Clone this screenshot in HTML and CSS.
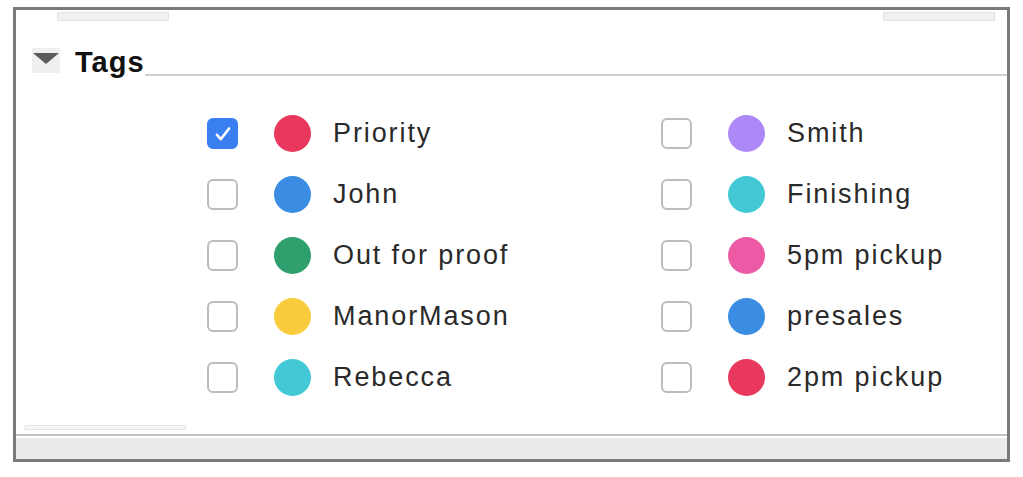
FILE: index.html
```html
<!DOCTYPE html>
<html lang="en">

<head>
    <meta charset="UTF-8">
    <title>Tags</title>
    <link rel="stylesheet" href="styles.css">
</head>

<body>
    <div class="panel">
        <div class="top-strip">
            <span class="ghost-bar"></span>
            <span class="ghost-bar"></span>
        </div>

        <div class="section-header">
            <span class="disclosure"><span class="arrow"></span></span>
            <h2>Tags</h2>
            <span class="header-rule"></span>
        </div>

        <div class="tag-list">
            <label class="tag-row">
                <span class="check checked">
                    <svg viewBox="0 0 16 16" width="22" height="22"><path d="M3.6 8.6 L6.4 11.8 L12.4 4" fill="none" stroke="#fff" stroke-width="1.9" stroke-linecap="round" stroke-linejoin="round"/></svg>
                </span>
                <span class="dot" style="background:#e8385e"></span>
                <span class="tag-name">Priority</span>
            </label>
            <label class="tag-row">
                <span class="check"></span>
                <span class="dot" style="background:#ad89f7"></span>
                <span class="tag-name">Smith</span>
            </label>
            <label class="tag-row">
                <span class="check"></span>
                <span class="dot" style="background:#3a8de2"></span>
                <span class="tag-name">John</span>
            </label>
            <label class="tag-row">
                <span class="check"></span>
                <span class="dot" style="background:#43c9d5"></span>
                <span class="tag-name">Finishing</span>
            </label>
            <label class="tag-row">
                <span class="check"></span>
                <span class="dot" style="background:#2f9f6d"></span>
                <span class="tag-name">Out for proof</span>
            </label>
            <label class="tag-row">
                <span class="check"></span>
                <span class="dot" style="background:#ec5aa6"></span>
                <span class="tag-name">5pm pickup</span>
            </label>
            <label class="tag-row">
                <span class="check"></span>
                <span class="dot" style="background:#f8cc3c"></span>
                <span class="tag-name">ManorMason</span>
            </label>
            <label class="tag-row">
                <span class="check"></span>
                <span class="dot" style="background:#3a8de2"></span>
                <span class="tag-name">presales</span>
            </label>
            <label class="tag-row">
                <span class="check"></span>
                <span class="dot" style="background:#43c9d5"></span>
                <span class="tag-name">Rebecca</span>
            </label>
            <label class="tag-row">
                <span class="check"></span>
                <span class="dot" style="background:#e8385e"></span>
                <span class="tag-name">2pm pickup</span>
            </label>
        </div>

        <div class="spacer"></div>

        <div class="panel-footer">
            <span class="ghost-bar small"></span>
            <div class="footer-rule"></div>
            <div class="footer-fill"></div>
        </div>
    </div>
</body>

</html>
```

FILE: styles.css
```css
body {
    margin: 0;
    background: #ffffff;
    font-family: 'Liberation Sans', Arial, sans-serif;
}

.panel {
    box-sizing: border-box;
    width: 997px;
    height: 455px;
    margin: 7px 0 0 13px;
    border: 3px solid #7a7a7a;
    display: flex;
    flex-direction: column;
    background: #ffffff;
}

.top-strip {
    height: 38px;
    display: flex;
    justify-content: space-between;
    align-items: flex-start;
    padding: 2px 12px 0 41px;
    box-sizing: border-box;
}

.ghost-bar {
    display: block;
    width: 110px;
    height: 7px;
    background: #f0f0f0;
    border: 1px solid #e2e2e2;
    border-radius: 1px;
}

.section-header {
    height: 28px;
    display: flex;
    align-items: flex-end;
}

.disclosure {
    width: 28px;
    height: 25px;
    margin: 0 0 3px 16px;
    background: #efefef;
    display: flex;
    align-items: center;
    justify-content: center;
}

.arrow {
    width: 0;
    height: 0;
    border-left: 13px solid transparent;
    border-right: 13px solid transparent;
    border-top: 11px solid #5a5a5a;
    margin-top: -4px;
}

.section-header h2 {
    margin: 0 0 0 15px;
    font-size: 29px;
    font-weight: bold;
    letter-spacing: 1px;
    color: #111111;
    line-height: 28px;
}

.header-rule {
    flex: 1;
    height: 0;
    border-bottom: 2px solid #cfcfcf;
}

.tag-list {
    display: grid;
    grid-template-columns: 454px 340px;
    grid-auto-rows: 61px;
    margin-top: 27px;
    padding-left: 191px;
}

.tag-row {
    display: flex;
    align-items: center;
}

.check {
    box-sizing: border-box;
    width: 31px;
    height: 31px;
    border: 2px solid #bcbcbc;
    border-radius: 6px;
    background: #ffffff;
    display: flex;
    align-items: center;
    justify-content: center;
}

.check.checked {
    background: #3a7ff0;
    border-color: #3a7ff0;
}

.dot {
    width: 37px;
    height: 37px;
    border-radius: 50%;
    margin-left: 36px;
}

.tag-name {
    margin-left: 22px;
    font-size: 27px;
    letter-spacing: 1.9px;
    color: #2a2a2a;
}

.spacer {
    flex: 1;
}

.panel-footer {
    display: flex;
    flex-direction: column;
}

.ghost-bar.small {
    width: 160px;
    height: 3px;
    margin-left: 8px;
    background: #f6f6f6;
    border-color: #e6e6e6;
}

.footer-rule {
    height: 2px;
    margin-top: 4px;
    background: #c2c2c2;
}

.footer-fill {
    height: 21px;
    margin-top: 2px;
    background: #ebebeb;
}
```
